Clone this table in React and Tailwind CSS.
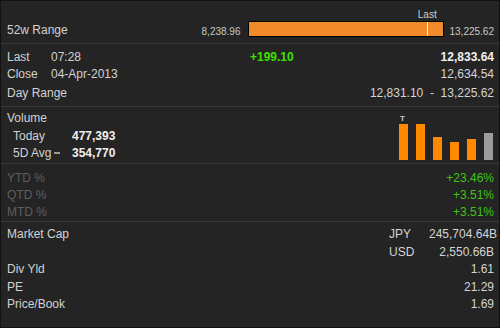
import React from "react";

const Sep = () => <div className="h-px bg-[#3a3a3a]" />;

function Row({ label, children, className = "h-[17px]", labelClass = "text-[#d2d2d2]" }) {
  return (
    <div className={`flex items-center ${className}`}>
      <div className={`flex-1 ${labelClass}`}>{label}</div>
      {children}
    </div>
  );
}

export default function App() {
  const low = 8238.96;
  const high = 13225.62;
  const last = 12833.64;
  const pct = ((last - low) / (high - low)) * 100;
  const bars = [
    { h: 36, c: "bg-[#ff8a00]" },
    { h: 36, c: "bg-[#ff8a00]" },
    { h: 23, c: "bg-[#ff8a00]" },
    { h: 18, c: "bg-[#ff8a00]" },
    { h: 21, c: "bg-[#ff8a00]" },
    { h: 27, c: "bg-[#9c9c9c]" },
  ];
  return (
    <div
      className="w-[500px] h-[328px] bg-[#242424] border border-[#121212] text-[12px] text-[#d4d4d4] overflow-hidden"
      style={{ fontFamily: '"Liberation Sans", Arial, sans-serif' }}
    >
      {/* 52w range */}
      <div className="pl-[6px] pr-[5px] h-[42px] flex items-center pt-[13px]">
        <div className="flex-1 text-[#d2d2d2] pt-[3px]">52w Range</div>
        <div className="text-[10px] text-[#c8c8c8] mr-[7px] pt-[6px]">8,238.96</div>
        <div className="relative w-[196px] h-[16px] border border-black bg-[#f08a2a]">
          <div className="absolute top-0 bottom-0 w-px bg-[#f4f4f4]" style={{ left: `${pct}%` }} />
          <div
            className="absolute -top-[15px] text-[10px] text-[#d0d0d0] -translate-x-1/2"
            style={{ left: `${pct}%` }}
          >
            Last
          </div>
        </div>
        <div className="text-[10px] text-[#c8c8c8] ml-[6px] pt-[6px]">13,225.62</div>
      </div>
      <Sep />

      {/* Last / Close / Day range */}
      <div className="pl-[6px] pr-[5px] pt-[4px] pb-[5px]">
        <div className="flex items-center h-[17px]">
          <div className="w-[44px] text-[#d2d2d2]">Last</div>
          <div className="w-[199px] text-[#d2d2d2]">07:28</div>
          <div className="flex-1 font-bold text-[#3ee000]">+199.10</div>
          <div className="font-bold text-[#f2f2f2]">12,833.64</div>
        </div>
        <div className="flex items-center h-[17px]">
          <div className="w-[44px] text-[#d2d2d2]">Close</div>
          <div className="flex-1 text-[#d2d2d2]">04-Apr-2013</div>
          <div>12,634.54</div>
        </div>
        <Row label="Day Range" className="h-[17px] mt-[2px]">
          <div>12,831.10&nbsp;&nbsp;-&nbsp;&nbsp;13,225.62</div>
        </Row>
      </div>
      <Sep />

      {/* Volume */}
      <div className="pl-[6px] pr-[5px] pt-[2px] h-[56px] flex">
        <div className="flex-1">
          <div className="h-[18px] flex items-center text-[#d2d2d2]">Volume</div>
          <div className="flex items-center h-[17px] pl-[6px]">
            <div className="w-[59px] text-[#d2d2d2]">Today</div>
            <div className="font-bold text-[#f0f0f0]">477,393</div>
          </div>
          <div className="flex items-center h-[17px] pl-[6px]">
            <div className="w-[59px] flex items-center text-[#d2d2d2]">
              5D Avg
              <span className="ml-[3px] inline-block w-[6px] h-[2px] bg-[#9a9a9a]" />
            </div>
            <div className="font-bold text-[#f0f0f0]">354,770</div>
          </div>
        </div>
        <div className="flex items-end gap-[8px] pb-[3px] pr-[1px]">
          {bars.map((b, i) => (
            <div key={i} className="relative w-[9px]">
              {i === 0 && (
                <div className="absolute -top-[9px] left-[1px] text-[8px] leading-none font-bold text-[#c8c8d8]">T</div>
              )}
              <div className={b.c} style={{ height: b.h }} />
            </div>
          ))}
        </div>
      </div>
      <Sep />

      {/* YTD / QTD / MTD */}
      <div className="pl-[6px] pr-[5px] pt-[5px] h-[57px]">
        <Row label="YTD %" labelClass="text-[#5e5e5e]">
          <div className="text-[#3fc514]">+23.46%</div>
        </Row>
        <Row label="QTD %" labelClass="text-[#5e5e5e]">
          <div className="text-[#3fc514]">+3.51%</div>
        </Row>
        <Row label="MTD %" labelClass="text-[#5e5e5e]">
          <div className="text-[#3fc514]">+3.51%</div>
        </Row>
      </div>
      <Sep />

      {/* Market data */}
      <div className="pl-[6px] pr-[5px] pt-[3px]">
        <div className="flex items-center h-[18px]">
          <div className="flex-1 text-[#d2d2d2]">Market Cap</div>
          <div className="w-[40px]">JPY</div>
          <div className="w-[65px] text-right">245,704.64B</div>
        </div>
        <div className="flex items-center h-[17px]">
          <div className="flex-1" />
          <div className="w-[40px]">USD</div>
          <div className="w-[65px] text-right">2,550.66B</div>
        </div>
        <Row label="Div Yld" className="h-[18px]">
          <div>1.61</div>
        </Row>
        <Row label="PE" className="h-[17px]">
          <div>21.29</div>
        </Row>
        <Row label="Price/Book" className="h-[18px]">
          <div>1.69</div>
        </Row>
      </div>
    </div>
  );
}
